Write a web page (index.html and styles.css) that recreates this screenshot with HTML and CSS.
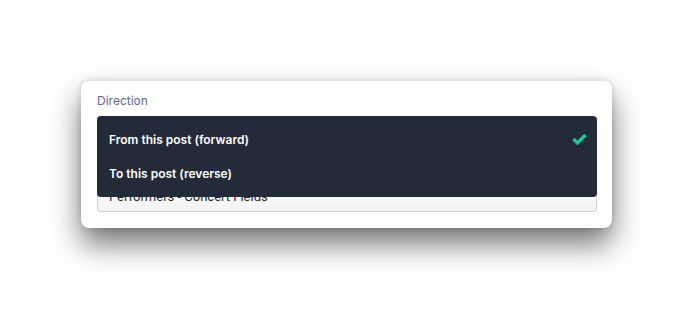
FILE: index.html
```html
<!DOCTYPE html>
<html lang="en">
<head>
    <meta charset="utf-8">
    <title>Direction</title>
    <link rel="stylesheet" href="styles.css">
</head>
<body>
    <div class="card">
        <label class="field-label">Direction</label>
        <div class="field">
            <div class="select-box">
                <span class="select-text">Performers - Concert Fields</span>
                <span class="select-arrow"></span>
            </div>
            <ul class="dropdown">
                <li class="dropdown-item">
                    <span>From this post (forward)</span>
                    <svg class="check" width="15" height="12" viewBox="0 0 15 12">
                        <path d="M1.5 6 L5.5 10 L13.5 2" fill="none" stroke="#1ec99b" stroke-width="3.2"/>
                    </svg>
                </li>
                <li class="dropdown-item">
                    <span>To this post (reverse)</span>
                </li>
            </ul>
        </div>
    </div>
</body>
</html>
```

FILE: styles.css
```css
html, body {
    height: 100%;
}
body {
    margin: 0;
    padding-top: 81px;
    box-sizing: border-box;
    background: #ffffff;
    font-family: Inter, "Liberation Sans", sans-serif;
}
.card {
    width: 531px;
    box-sizing: border-box;
    margin: 0 auto;
    padding: 12px 15px 16px 16px;
    background: #ffffff;
    border-radius: 8px;
    box-shadow: 0 16px 30px rgba(0, 0, 0, 0.55), 0 0 6px rgba(0, 0, 0, 0.15);
}
.field-label {
    display: block;
    font-size: 12px;
    line-height: 15px;
    color: #5d6b96;
}
.field {
    position: relative;
    padding-top: 72px;
}
.select-box {
    height: 32px;
    box-sizing: border-box;
    border: 1px solid #cbd0e3;
    border-radius: 3px;
    background: linear-gradient(#ffffff, #f3f3f5);
    display: flex;
    align-items: center;
    justify-content: space-between;
    padding: 0 12px 0 11px;
}
.select-text {
    font-family: Roboto, "Liberation Sans", sans-serif;
    font-size: 13px;
    color: #1f2328;
}
.select-arrow {
    width: 0;
    height: 0;
    border-left: 4px solid transparent;
    border-right: 4px solid transparent;
    border-top: 5px solid #222b37;
    margin-top: -8px;
}
.dropdown {
    position: absolute;
    top: 8px;
    left: 0;
    right: 0;
    margin: 0;
    padding: 6px 0 7px;
    list-style: none;
    background: #222b37;
    border-radius: 4px;
}
.dropdown-item {
    height: 34px;
    display: flex;
    align-items: center;
    justify-content: space-between;
    padding: 0 10px 0 12px;
    color: #ffffff;
    font-size: 12px;
    font-weight: 600;
}
```
